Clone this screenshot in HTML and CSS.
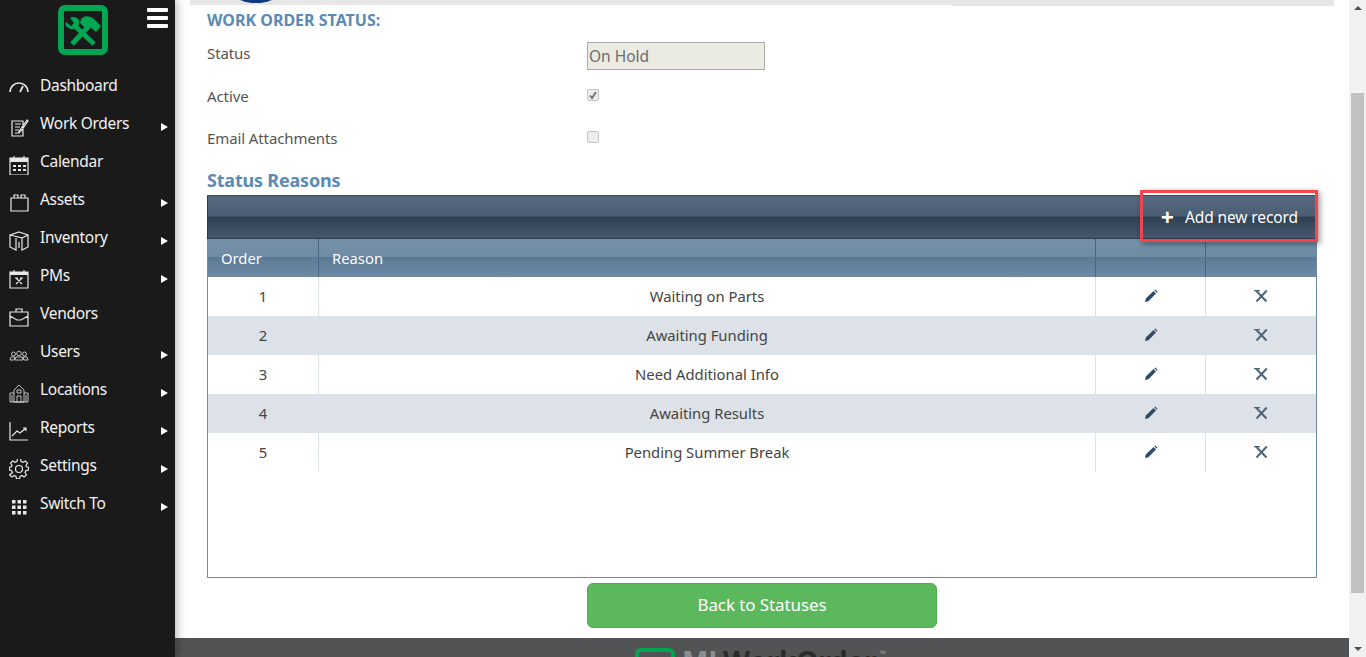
FILE: index.html
```html
<!DOCTYPE html>
<html lang="en">
<head>
<meta charset="utf-8">
<title>Work Order Status</title>
<link rel="stylesheet" href="styles.css">
</head>
<body>
<aside class="sidebar">
  <div class="brand">
    <svg class="logo" viewBox="0 0 50 50" width="50" height="50">
      <rect x="3" y="3" width="44" height="44" rx="4" fill="none" stroke="#00a651" stroke-width="6"/>
      <path d="M16 20L36 39" stroke="#00a651" stroke-width="5" fill="none"/>
      <path d="M8 17l5 4 3-3-4-5c3-2 7-1 9 2 1 3 0 6-3 8-3 2-7 1-9-1-2-2-2-3-1-5z" fill="#00a651"/>
      <path d="M14 39L31 21" stroke="#00a651" stroke-width="5" fill="none"/>
      <path d="M23 14c4-4 9-3 13 0l7 7-5 6-6-5-3 3-7-7z" fill="#00a651"/>
    </svg>
    <div class="burger"><span></span><span></span><span></span></div>
  </div>
  <nav class="menu">
    <a class="item"><svg class="ico heavy" viewBox="0 0 20 20"><path d="M1 13a9 9 0 0 1 18 0M11 13l3-6"/></svg><span class="label">Dashboard</span></a>
    <a class="item more"><svg class="ico" viewBox="0 0 20 20"><path d="M3 4h11v15H3zM6 7h6M6 10h5M6 13h4M6 16h5M18 3l-7 10-1 2 2-1 7-10z"/></svg><span class="label">Work Orders</span></a>
    <a class="item"><svg class="ico" viewBox="0 0 20 20"><path d="M1 3h18v17H1zM5 1v4M15 1v4"/><path class="solid" d="M1 3h18v4H1zM4 10h3v2H4zM9 10h3v2H9zM14 10h3v2h-3zM4 14h3v2H4zM9 14h3v2H9zM14 14h3v2h-3z"/></svg><span class="label">Calendar</span></a>
    <a class="item more"><svg class="ico" viewBox="0 0 20 20"><path d="M2 5h17v13H2zM5 5V2h4v3M12 5V2h4v3"/></svg><span class="label">Assets</span></a>
    <a class="item more"><svg class="ico" viewBox="0 0 20 20"><path d="M10 1l9 3v12l-6 3V7L1 4zM1 4v12l6 3V7M13 7l6-3M10 11v6"/></svg><span class="label">Inventory</span></a>
    <a class="item more"><svg class="ico" viewBox="0 0 20 20"><path d="M1 3h18v16H1zM5 1v3M15 1v3"/><path class="solid" d="M1 3h18v3H1z"/><path d="M7 9l6 6M13 9l-6 6M6 9h3M11 9h3"/></svg><span class="label">PMs</span></a>
    <a class="item"><svg class="ico" viewBox="0 0 20 20"><path d="M1 5h18v14H1zM7 5V2h6v3M1 9l7 4h4l7-4"/></svg><span class="label">Vendors</span></a>
    <a class="item more"><svg class="ico thin" viewBox="0 0 20 20"><circle cx="4.500" cy="9" r="2"/><circle cx="10" cy="8.500" r="2.300"/><circle cx="15.500" cy="9" r="2"/><path d="M1 15l1-3h4l-1 3zM6 15l1-3h6l1 3zM15 15l-1-3h4l1 3z"/></svg><span class="label">Users</span></a>
    <a class="item more"><svg class="ico thin" viewBox="0 0 20 20"><path d="M1 19V10h4M19 19V10h-4M5 19V7l5-5 5 5v12zM1 19h18M8 19v-6h4v6M8 7h4v3H8zM3 12v7M17 12v7"/></svg><span class="label">Locations</span></a>
    <a class="item more"><svg class="ico" viewBox="0 0 20 20"><path d="M1 1v18h18M3 15l5-5 3 2 6-5M14 7h3v3"/></svg><span class="label">Reports</span></a>
    <a class="item more"><svg class="ico" viewBox="0 0 20 20"><circle cx="10" cy="10" r="3.500"/><path d="M8.500 1h3l.5 3 2 1 2.500-1.500 2 2.500L17 8l.5 1.500 2 .5v3l-2.500.5-1 2 1.500 2.500-2.500 2-2-1.500-2 1-.5 2.500h-3l-.5-2.500-2-1-2 1.500-2.500-2L3.500 15.500l-1-2L.500 13v-3l2-.5L3 8 1.500 6l2-2.500L6 5l2-1z" transform="translate(0 -1.500) scale(1 .97)"/></svg><span class="label">Settings</span></a>
    <a class="item more"><svg class="ico" viewBox="0 0 20 20"><path class="solid" d="M3 3h3.500v3.500H3zM8.500 3H12v3.500H8.500zM14 3h3.500v3.500H14zM3 8.500h3.500V12H3zM8.500 8.500H12V12H8.500zM14 8.500h3.500V12H14zM3 14h3.500v3.500H3zM8.500 14H12v3.500H8.500zM14 14h3.500v3.500H14z"/></svg><span class="label">Switch To</span></a>
  </nav>
</aside>

<main class="main">
  <div class="content">
    <div class="topstrip">
      <div class="strip-left"><svg class="arc" viewBox="0 0 46 4" width="46" height="4"><ellipse cx="23" cy="-8" rx="23" ry="11" fill="#12387f"/></svg></div>
      <div class="strip-right"></div>
    </div>
    <h2 class="section-title">WORK ORDER STATUS:</h2>
    <div class="form">
      <label class="form-label">Status</label>
      <div class="form-field"><input class="readonly" type="text" value="On Hold" disabled></div>
      <label class="form-label">Active</label>
      <div class="form-field"><span class="check"><svg viewBox="0 0 12 12" width="12" height="12"><path d="M3 6.500l2 2.500 4-6" fill="none" stroke="#777" stroke-width="2"/></svg></span></div>
      <label class="form-label">Email Attachments</label>
      <div class="form-field"><span class="check"></span></div>
    </div>
    <h3 class="grid-title">Status Reasons</h3>
    <div class="grid">
      <div class="toolbar">
        <a class="add"><span class="plus">+</span>Add new record</a>
        <span class="highlight"></span>
      </div>
      <div class="row head">
        <div class="cell left">Order</div>
        <div class="cell left">Reason</div>
        <div class="cell"></div>
        <div class="cell"></div>
      </div>
      <div class="row">
        <div class="cell">1</div><div class="cell">Waiting on Parts</div>
        <div class="cell"><svg class="act"><use href="#pen"/></svg></div><div class="cell"><svg class="act"><use href="#del"/></svg></div>
      </div>
      <div class="row alt">
        <div class="cell">2</div><div class="cell">Awaiting Funding</div>
        <div class="cell"><svg class="act"><use href="#pen"/></svg></div><div class="cell"><svg class="act"><use href="#del"/></svg></div>
      </div>
      <div class="row">
        <div class="cell">3</div><div class="cell">Need Additional Info</div>
        <div class="cell"><svg class="act"><use href="#pen"/></svg></div><div class="cell"><svg class="act"><use href="#del"/></svg></div>
      </div>
      <div class="row alt">
        <div class="cell">4</div><div class="cell">Awaiting Results</div>
        <div class="cell"><svg class="act"><use href="#pen"/></svg></div><div class="cell"><svg class="act"><use href="#del"/></svg></div>
      </div>
      <div class="row">
        <div class="cell">5</div><div class="cell">Pending Summer Break</div>
        <div class="cell"><svg class="act"><use href="#pen"/></svg></div><div class="cell"><svg class="act"><use href="#del"/></svg></div>
      </div>
    </div>
    <div class="actions"><a class="btn-back">Back to Statuses</a></div>
  </div>
  <footer class="footer">
    <svg class="foot-logo" viewBox="0 0 40 40" width="40" height="40"><rect x="2" y="2" width="36" height="36" rx="4" fill="none" stroke="#00a651" stroke-width="4"/></svg>
    <span class="foot-text"><span class="ml">ML</span>WorkOrder</span><span class="tm">™</span>
  </footer>
</main>

<div class="scrollbar">
  <span class="arrow up"></span>
  <div class="track"><div class="thumb"></div></div>
  <span class="arrow down"></span>
</div>

<svg class="defs" width="0" height="0">
  <symbol id="pen" viewBox="0 0 14 14"><path d="M1 13l.8-3.400L9.500 2 12 4.500 4.400 12.200zM10.300 1.200l1-.7 2.200 2.200-.7 1z" fill="#2f4b68"/></symbol>
  <symbol id="del" viewBox="0 0 14 14"><path d="M2 1.500L12.500 12.500M12.800 1.500L2.500 12.500" stroke="#50647c" stroke-width="2" fill="none"/><path d="M0 1h6v1.200H0z" fill="#50647c"/></symbol>
</svg>
</body>
</html>
```

FILE: styles.css
```css
* { box-sizing: border-box; }
html, body { margin: 0; height: 657px; overflow: hidden; }
body {
  display: flex;
  font-family: "Noto Sans", "Open Sans", sans-serif;
  font-size: 15px;
  color: #333;
  background: #fff;
}
.sidebar {
  width: 175px;
  flex: none;
  background: #1a1a1a;
  color: #fff;
  box-shadow: 3px 0 8px rgba(0,0,0,.25);
  position: relative;
  z-index: 2;
}
.brand { height: 66px; display: flex; padding: 5px 7px 0 58px; justify-content: space-between; }
.logo { display: block; }
.burger { width: 21px; height: 20px; margin-top: 3px; display: flex; flex-direction: column; justify-content: space-between; }
.burger span { display: block; height: 4px; border-radius: 1px; background: #fff; }
.menu { display: flex; flex-direction: column; }
.item { height: 38px; display: flex; align-items: center; padding-left: 9px; position: relative; }
.ico { width: 20px; height: 20px; margin-top: 8px; flex: none; fill: none; stroke: #e8e8e8; stroke-width: 1.200; }
.ico.heavy { stroke-width: 1.700; }
.ico.thin { stroke-width: .8; }
.ico .solid { fill: #e8e8e8; stroke: none; }
.label { margin-left: 11px; font-size: 15.500px; letter-spacing: -.3px; color: #f2f2f2; }
.more::after {
  content: "";
  position: absolute;
  left: 161px;
  top: 19px;
  border-left: 7px solid #fff;
  border-top: 4.500px solid transparent;
  border-bottom: 4.500px solid transparent;
}
.main { flex: 1; min-width: 0; display: flex; flex-direction: column; height: 657px; overflow: hidden; }
.content { flex: 1; padding: 0 15px; }
.topstrip { display: flex; align-items: flex-start; }
.strip-left { flex: 1; height: 5px; background: #e6e6e6; overflow: hidden; padding-left: 43px; }
.strip-right { width: 382px; flex: none; height: 6px; background: #e6e6e6; }
.arc { display: block; }
.section-title { margin: 5px 0 0 17px; height: 18px; font-size: 16px; line-height: 18px; font-weight: 700; color: #5b8ab5; letter-spacing: 0; }
.form { margin: 13px 0 0 17px; display: grid; grid-template-columns: 380px 1fr; grid-template-rows: 42px 42px 42px; font-size: 15px; color: #555; }
.form-label { line-height: 22px; padding-top: 1px; letter-spacing: -.1px; }
.form-label:first-child { padding-top: 0; }
.form-field { display: flex; align-items: flex-start; }
.readonly {
  width: 178px; height: 28px;
  border: 1px solid #aaa;
  background: #ebebe4;
  padding: 0 1px;
  font: inherit;
  font-size: 15.500px;
  color: #6d6d6d;
}
.check {
  display: block;
  width: 12px; height: 12px;
  margin-top: 5px;
  border: 1px solid #c4c4c4;
  border-radius: 2px;
  background: #ededed;
}
.check svg { display: block; margin: -1px; }
.grid-title { margin: 1px 0 0 17px; height: 22px; font-size: 18px; line-height: 22px; font-weight: 700; color: #5b8ab5; letter-spacing: -.2px; }
.grid {
  margin: 4px 17px 0;
  width: 1110px;
  height: 383px;
  border: 1px solid #6f8ba4;
  border-top-color: #3b4d61;
  font-size: 14.800px;
}
.toolbar {
  height: 43px;
  margin: 0 -1px;
  border: 1px solid #2a3a4c;
  border-top: 0;
  display: flex;
  justify-content: flex-end;
  align-items: center;
  padding-right: 18px;
  position: relative;
  background: linear-gradient(#56697f 0, #4a5d73 48%, #2f4054 50%, #46586e 100%);
}
.add { color: #fff; font-size: 15.500px; display: flex; align-items: center; letter-spacing: -.1px; }
.plus { font-size: 23px; font-weight: 700; line-height: 20px; margin-right: 11px; }
.highlight {
  position: absolute;
  left: 932px; top: -6px;
  width: 178px; height: 52px;
  border: 3px solid #f5444b;
  box-shadow: 2px 2px 6px rgba(0,0,0,.4);
}
.row { display: grid; grid-template-columns: 111px 777px 110px 110px; height: 39px; }
.cell { display: flex; align-items: center; justify-content: center; border-right: 1px solid #dce2e8; padding-bottom: 2px; color: #444; }
.cell:last-child { border-right: 0; }
.row.alt { background: #dce2e8; }
.row.alt .cell { border-right-color: #dce2e8; }
.row.head {
  height: 38px;
  background: linear-gradient(#7591a8 0, #6f8ca5 46%, #5b7a95 48%, #6f8ba4 100%);
}
.row.head .cell { border-right: 1px solid #4a6580; color: #fff; justify-content: flex-start; padding: 0 0 0 13px; }
.row.head .cell:last-child { border-right: 0; }
.act { width: 14px; height: 14px; }
.actions { display: flex; justify-content: flex-start; margin: 5px 0 0 397px; }
.btn-back {
  width: 350px; height: 45px;
  display: flex; align-items: center; justify-content: center;
  padding-bottom: 2px;
  background: #5cb85c;
  border: 1px solid #4cae4c;
  border-radius: 6px;
  color: #fff;
  font-size: 17px;
  letter-spacing: -.1px;
}
.footer {
  height: 19px;
  flex: none;
  background: #525354;
  display: flex;
  align-items: flex-start;
  padding: 10px 0 0 460px;
  overflow: hidden;
}
.foot-logo { flex: none; }
.foot-text { margin: -5px 0 0 7px; font-size: 28px; line-height: 36px; font-weight: 700; color: #2b2b2b; letter-spacing: -.2px; }
.foot-text .ml { color: #8d8e8f; }
.tm { margin: -1px 0 0 3px; font-size: 9px; color: #999; }
.scrollbar { width: 17px; flex: none; background: #f1f1f1; display: flex; flex-direction: column; align-items: center; }
.arrow { display: block; flex: none; margin: 6px 0; border-left: 4px solid transparent; border-right: 4px solid transparent; width: 0; height: 0; }
.arrow.up { border-bottom: 4px solid #505050; }
.arrow.down { border-top: 4px solid #505050; }
.track { flex: 1; width: 100%; padding: 77px 2px 0 2px; }
.thumb { height: 500px; background: #c1c1c1; }
.defs { position: absolute; }
```
